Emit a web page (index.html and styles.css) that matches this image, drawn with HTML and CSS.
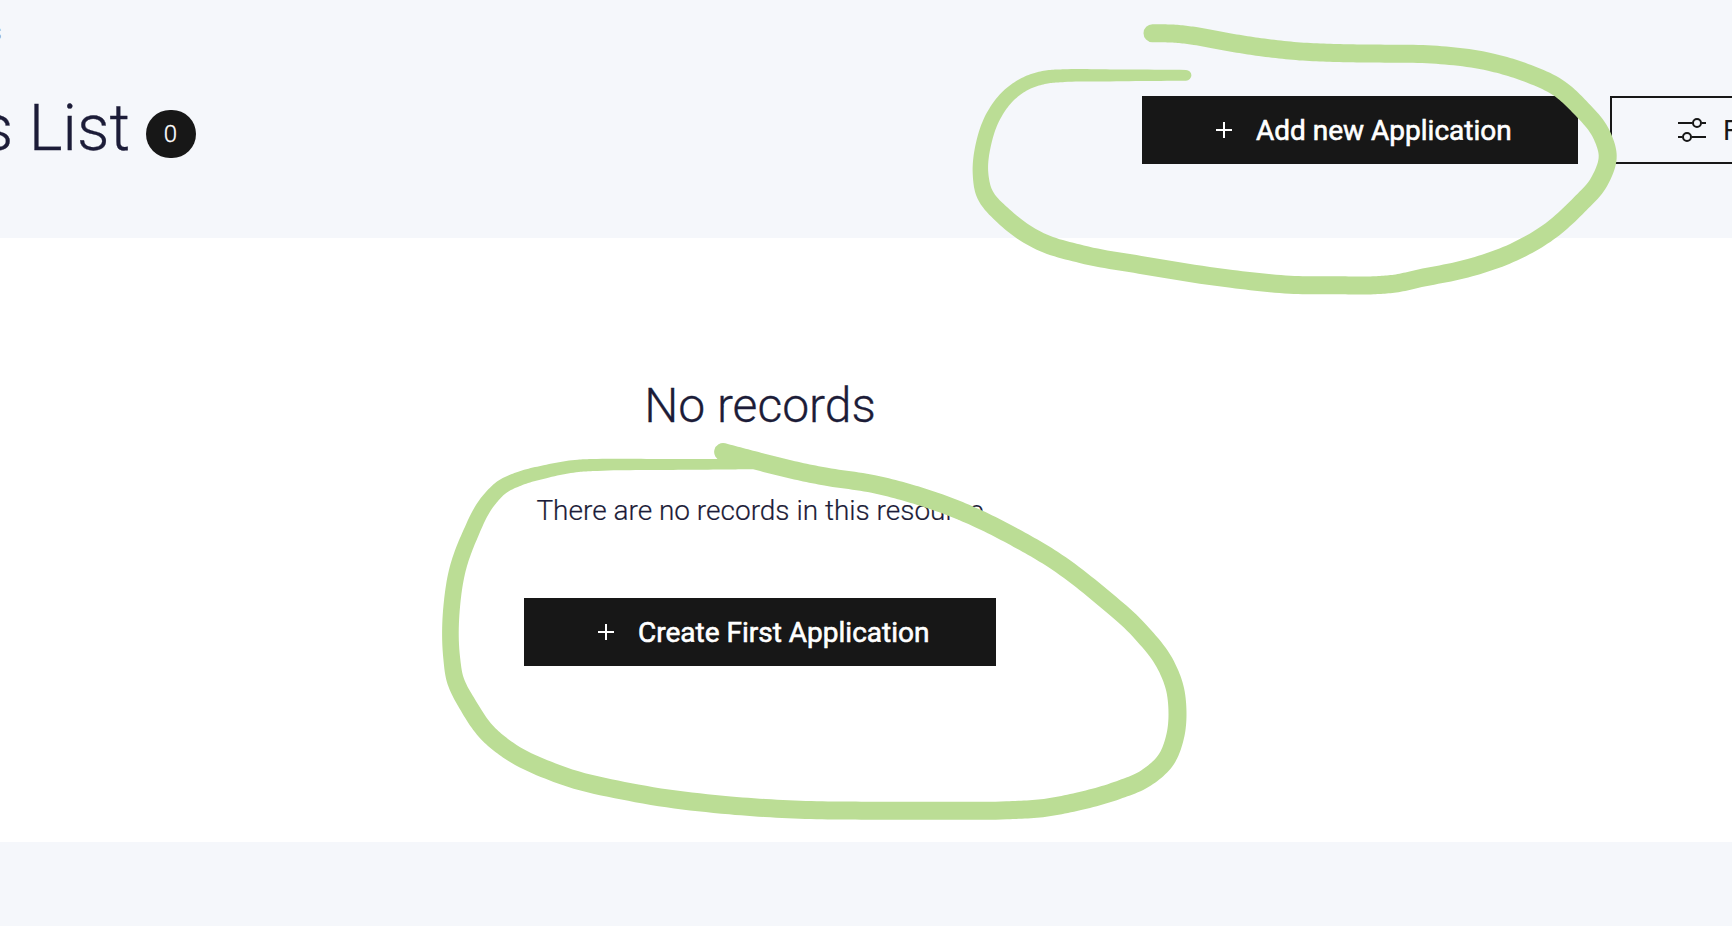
FILE: index.html
```html
<!DOCTYPE html>
<html lang="en">
<head>
<meta charset="utf-8">
<title>Applications List</title>
<link rel="stylesheet" href="styles.css">
</head>
<body>
<div class="page">
  <header class="header">
    <nav class="crumbs"><span>s</span></nav>
    <div class="bar">
      <div class="heading">
        <h1 class="title">s List</h1>
        <span class="count">0</span>
      </div>
      <div class="actions">
        <button class="btn btn-primary add">
          <svg class="plus" viewBox="0 0 16 16"><path d="M8 0v16M0 8h16"/></svg>
          <span class="label">Add new Application</span>
        </button>
        <button class="btn btn-outline">
          <svg class="sliders" viewBox="0 0 28 24"><path d="M0 5h14.500M23.500 5H28M0 19h4.500M13.500 19H28"/><circle cx="19" cy="5" r="4"/><circle cx="9" cy="19" r="4"/></svg>
          <span class="label">Filter</span>
        </button>
      </div>
    </div>
  </header>
  <main class="empty">
    <h2 class="empty-title">No records</h2>
    <p class="empty-text">There are no records in this resource</p>
    <button class="btn btn-primary create">
      <svg class="plus" viewBox="0 0 16 16"><path d="M8 0v16M0 8h16"/></svg>
      <span class="label">Create First Application</span>
    </button>
  </main>
</div>
<svg class="ink" viewBox="0 0 1732 926"><path id="ink-top"/><path id="ink-bottom"/></svg>
<script src="ink.js"></script>
</body>
</html>
```
FILE: styles.css
```css
* { box-sizing: border-box; }
body { margin: 0; background: #f5f7fb; font-family: Roboto, "Liberation Sans", sans-serif; font-weight: 300; color: #1c1c38; overflow: hidden; }
.page { width: 1732px; height: 926px; overflow: hidden; }
.header { height: 238px; }
.crumbs { height: 96px; padding-top: 18px; width: 2px; display: flex; justify-content: flex-end; font-size: 24px; line-height: 28px; color: #85868c; opacity: .9; overflow: hidden; }
.bar { display: flex; justify-content: space-between; }
.heading { width: 196px; height: 68px; display: flex; justify-content: flex-end; align-items: flex-start; }
.title { margin: -5px 16px 0 0; font-size: 64px; line-height: 75px; font-weight: 300; white-space: nowrap; -webkit-text-stroke: .3px; }
.count { flex: none; width: 50px; height: 48px; margin-top: 14px; border-radius: 24px; background: #171717; color: #fff; font-size: 24px; line-height: 48px; text-align: center; padding-right: 1px; -webkit-text-stroke: .3px; }
.actions { display: flex; gap: 32px; width: 590px; overflow: hidden; }
.btn { flex: none; display: flex; align-items: center; height: 68px; border: 2px solid #171717; border-radius: 0; padding: 0 0 0 72px; font: 400 28px/40px Roboto, "Liberation Sans", sans-serif; white-space: nowrap; }
.btn-primary { background: #171717; color: #fff; }
.btn-primary .label { -webkit-text-stroke: .6px; }
.label { padding-top: 1px; }
.btn-outline { width: 300px; background: transparent; color: #171717; padding-left: 66px; }
.add { width: 436px; }
.create { width: 472px; margin-top: 67px; }
.plus { width: 16px; height: 16px; margin-right: 24px; fill: none; stroke: #fff; stroke-width: 2; }
.sliders { width: 28px; height: 24px; margin-right: 17px; fill: none; stroke: #171717; stroke-width: 2; }
.empty { height: 604px; background: #fff; display: flex; flex-direction: column; align-items: center; padding: 140px 212px 0 0; }
.empty-title { margin: 0; font-size: 48px; line-height: 56px; font-weight: 300; -webkit-text-stroke: .3px; }
.empty-text { margin: 57px 0 0; font-size: 28px; line-height: 40px; -webkit-text-stroke: .2px; }
.ink { position: absolute; left: 0; top: 0; width: 1732px; height: 926px; fill: #bbdd95; pointer-events: none; }
```
FILE: ink.js
```js
// Marker strokes: each point is [x, y, radius]; omitted radius means 9.
function brush(raw) {
  const p = raw.map(([x, y, r = 9]) => [x, y, r]);
  const n = p.length;
  const dist = (a, b) => Math.hypot(a[0] - b[0], a[1] - b[1]);
  const slope = i => {
    if (i === 0) return [0, 1, 2].map(k => (p[1][k] - p[0][k]) / dist(p[0], p[1]));
    if (i === n - 1) return [0, 1, 2].map(k => (p[i][k] - p[i - 1][k]) / dist(p[i], p[i - 1]));
    const u = dist(p[i - 1], p[i]), v = dist(p[i], p[i + 1]);
    return [0, 1, 2].map(k => ((p[i][k] - p[i - 1][k]) / u * v + (p[i + 1][k] - p[i][k]) / v * u) / (u + v));
  };
  const line = [];
  for (let i = 0; i < n - 1; i++) {
    const len = dist(p[i], p[i + 1]), a = slope(i), b = slope(i + 1);
    for (let j = 0; j < 12; j++) {
      const t = j / 12, t2 = t * t, t3 = t2 * t;
      line.push([0, 1, 2].map(k =>
        (2 * t3 - 3 * t2 + 1) * p[i][k] + (t3 - 2 * t2 + t) * len * a[k] +
        (3 * t2 - 2 * t3) * p[i + 1][k] + (t3 - t2) * len * b[k]));
    }
  }
  line.push(p[n - 1]);
  const side = s => line.map((c, i) => {
    const a = line[Math.max(i - 1, 0)], b = line[Math.min(i + 1, line.length - 1)];
    const l = dist(a, b);
    return [c[0] + s * (b[1] - a[1]) / l * c[2], c[1] - s * (b[0] - a[0]) / l * c[2]].map(v => v.toFixed(2)).join(' ');
  });
  const left = side(1), right = side(-1).reverse();
  const r0 = line[0][2], r1 = line[line.length - 1][2];
  return `M${left.join('L')}A${r1} ${r1} 0 0 1 ${right[0]}L${right.slice(1).join('L')}A${r0} ${r0} 0 0 1 ${left[0]}Z`;
}

const topStroke = [
  [1152.5, 33.3], [1175, 33.7], [1195, 36], [1227, 41.9], [1260, 47.1], [1300, 51.4], [1340, 53.1], [1380, 53.6], [1436.7, 54.8],
  [1490, 62], [1525, 72.3], [1560, 89], [1580, 107.3], [1601.5, 134.5], [1607.7, 155.7], [1599, 182], [1578.3, 205.7], [1548.3, 232.3],
  [1513.3, 252.3], [1470, 267.7], [1420, 278.3], [1395, 283.6], [1373.3, 285.3], [1340, 285.3], [1290, 284.7], [1231.7, 278.9],
  [1140, 264.8], [1081.7, 254.2], [1040, 241.3], [1005.7, 218], [984, 192.3, 8.4], [980.5, 173.3, 7.8], [983.5, 144, 7.6],
  [993.3, 116.3, 7.4], [1009.5, 94.7, 7], [1028, 82.4, 6.7], [1046.7, 77, 6.6], [1064, 75.7, 6.4], [1110, 75.4, 6], [1186, 75.3, 5.4]
];
const bottomStroke = [
  [723, 452], [753.3, 460], [790, 469.3], [826, 476.7], [873.3, 484], [913.3, 494.3], [940, 503], [978.3, 518.7], [1018, 539],
  [1052.7, 559.3], [1101, 596], [1139.3, 630.5], [1166, 665.5], [1175, 689], [1177.3, 706.7], [1175, 737], [1166.5, 759],
  [1146, 778], [1117, 790.5], [1078, 801.5], [1042, 808.2], [1006.7, 810.3], [940, 810.7], [866.7, 810.7], [800, 809.7],
  [730, 805.4], [636.7, 793.3], [556.7, 773.5], [508, 750], [487.5, 733], [468.5, 706], [455, 679, 8.6], [451.7, 658, 8.4],
  [451.7, 606.7, 8.3], [458.5, 566, 8.2], [469.3, 536.7, 8], [489, 500, 7.6], [502, 487, 7.3], [520, 478.5, 7], [545, 471.7, 6.6],
  [578.3, 465.8, 6.2], [597, 464.9, 6], [663, 464.5, 5.5], [723, 464.3, 5.2], [753, 464.2, 5]
];
document.getElementById('ink-top').setAttribute('d', brush(topStroke));
document.getElementById('ink-bottom').setAttribute('d', brush(bottomStroke));
```
